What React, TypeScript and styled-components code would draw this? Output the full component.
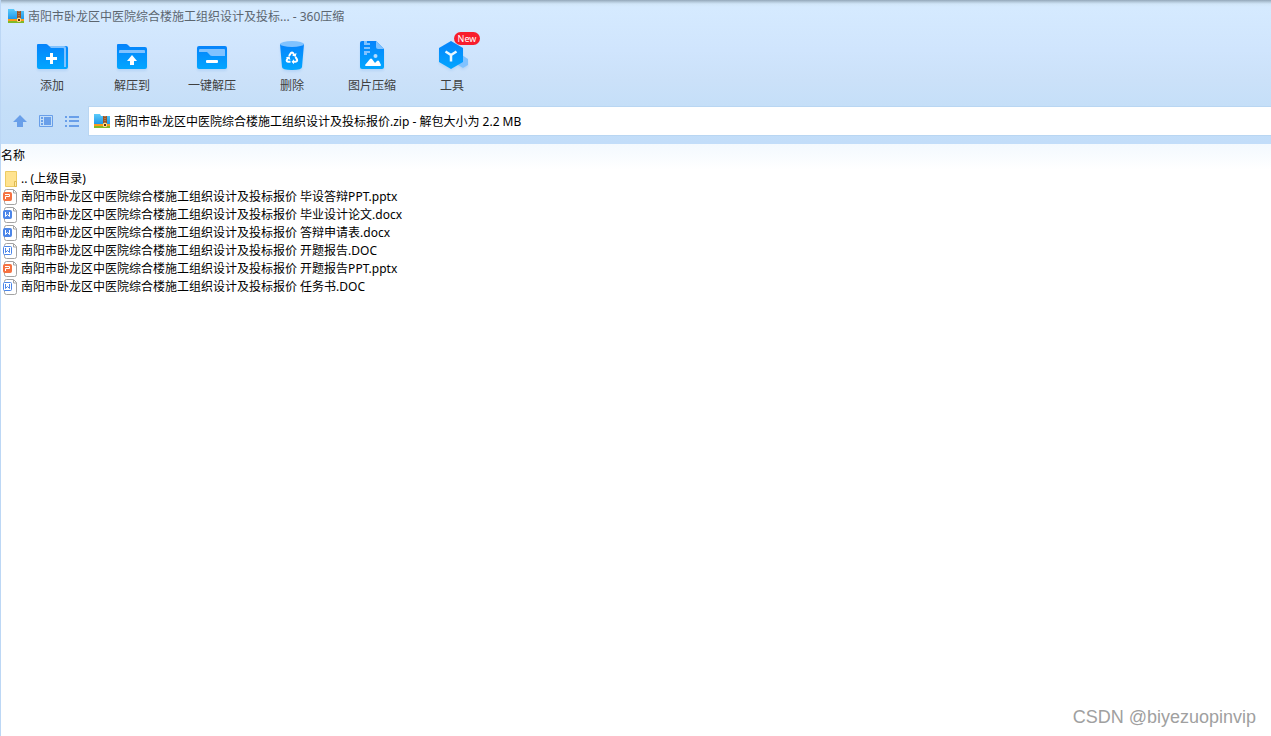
import React from "react";
import styled, { createGlobalStyle } from "styled-components";

const Global = createGlobalStyle`
  * { box-sizing: border-box; }
  body {
    margin: 0;
    background: #fff;
    color: #000;
    font: 12px/18px "Noto Sans", "Noto Sans CJK SC", sans-serif;
  }
  button, input { font: inherit; color: inherit; }
`;

const Window = styled.div`
  display: flex;
  flex-direction: column;
  min-height: 100vh;
  border-left: 1px solid #bcd7f5;
`;

const Chrome = styled.header`
  background:
    linear-gradient(#93a7b9 0, #b5cadb 2px, rgba(206, 227, 245, 0.7) 4px, transparent 7px),
    linear-gradient(#d6ebff 0, #d0e5fd 50px, #cbe1f9 80px, #c5dff8 107px, #c2ddf9 144px);
`;

const TitleBar = styled.div`
  display: flex;
  align-items: center;
  gap: 4px;
  height: 32px;
  padding-left: 7px;
`;

const Title = styled.h1`
  margin: 0;
  padding-top: 2px;
  font-size: 12px;
  font-weight: 400;
  color: #5c6670;
`;

const Toolbar = styled.nav`
  display: flex;
  height: 75px;
  padding-left: 11px;
`;

const Tool = styled.button`
  position: relative;
  display: flex;
  flex-direction: column;
  align-items: center;
  gap: 2px;
  width: 80px;
  height: 68px;
  padding: 7px 0 0;
  border: 0;
  background: none;
  color: #404040;
  white-space: nowrap;
`;

const ToolIcon = styled.svg`
  display: block;
  flex: none;
  width: 36px;
  height: 36px;
  filter: drop-shadow(0 2px 1px rgba(60, 140, 230, 0.15));
`;

const Badge = styled.span`
  position: absolute;
  top: 0;
  left: 42px;
  width: 26px;
  height: 13px;
  border-radius: 7px;
  background: #f81d2c;
  color: #fff;
  font-size: 9px;
  line-height: 13px;
  text-align: center;
`;

const AddressRow = styled.div`
  display: flex;
  align-items: center;
  height: 28px;
  margin-bottom: 9px;
`;

const NavButtons = styled.div`
  display: flex;
  gap: 10px;
  width: 88px;
  padding-left: 11px;
`;

const NavButton = styled.button`
  width: 16px;
  height: 16px;
  padding: 0;
  border: 0;
  background: none;

  svg { display: block; }
`;

const AddressBox = styled.label`
  display: flex;
  flex: 1;
  align-items: center;
  gap: 4px;
  height: 28px;
  padding-left: 5px;
  background: #fff;
  box-shadow: 0 0 0 1px #b9d6f2;
`;

const AddressInput = styled.input`
  flex: 1;
  min-width: 0;
  height: 24px;
  padding: 0;
  border: 0;
  outline: 0;
  background: none;
`;

const FileTable = styled.table`
  width: 100%;
  border-spacing: 0;
`;

const NameHeading = styled.th`
  height: 26px;
  padding: 0 0 3px;
  background: linear-gradient(#f3f9fe, #fff);
  font-weight: 400;
  text-align: left;
`;

const NameCell = styled.td`
  height: 18px;
  padding: 0;
`;

const FileLink = styled.a`
  display: flex;
  align-items: center;
  gap: 4px;
  height: 18px;
  padding-left: 1px;
  color: inherit;
  text-decoration: none;
  white-space: pre;

  svg { flex: none; }
`;

const Watermark = styled.footer`
  margin-top: auto;
  padding: 0 15px 8px 0;
  color: #a0a0a0;
  font: 18px/22px "Liberation Sans", Arial, sans-serif;
  text-align: right;
`;

const ArchiveIcon = () => (
  <svg width="16" height="16" viewBox="0 0 16 16" aria-hidden="true">
    <defs>
      <linearGradient id="archive" x1="0" y1="0" x2="0" y2="1">
        <stop offset="0" stopColor="#5ccbfa" />
        <stop offset="1" stopColor="#1e98ea" />
      </linearGradient>
    </defs>
    <path d="M0 1h6l1 2h9v8H0z" fill="url(#archive)" />
    <path d="M0 11h16v2H0z" fill="#fb9a1c" />
    <path d="M0 13h16v2H0z" fill="#80b927" />
    <path d="M9 3h4v11H9z" fill="#9a5526" />
    <path d="M11 3v7" stroke="#c99a6c" strokeDasharray="1 1" />
    <path d="M9.500 10.500h3v3h-3z" fill="#5f3010" stroke="#ffe18a" />
  </svg>
);

const BlueGradient = () => (
  <defs>
    <linearGradient id="blue" x1="0" y1="0" x2="0" y2="1">
      <stop offset="0" stopColor="#0683fb" />
      <stop offset="1" stopColor="#02a6ff" />
    </linearGradient>
  </defs>
);

const AddIcon = () => (
  <>
    <BlueGradient />
    <path d="M4 5h8q1 0 2 1l1 1h17q2 0 2 2v19q0 2-2 2H5q-2 0-2-2V6q0-1 1-1z" fill="url(#blue)" />
    <path d="M15 7h15q2 0 2 2v19h-2V10q0-1-1-1H17z" fill="#80c2ff" />
    <path d="M17.500 14v11M12 19.500h11" stroke="#fff" strokeWidth="3" />
  </>
);

const ExtractIcon = () => (
  <>
    <path d="M4 5h8q1 0 2 1l2 2h15q2 0 2 2v18q0 2-2 2H5q-2 0-2-2V6q0-1 1-1z" fill="url(#blue)" />
    <path d="M6 11h24q1 0 1 1v2H5v-2q0-1 1-1z" fill="#80c2ff" />
    <path d="m18 16 5 6h-3v4h-4v-4h-3z" fill="#fff" />
  </>
);

const QuickIcon = () => (
  <>
    <rect x="3" y="7" width="30" height="23" rx="2" fill="url(#blue)" />
    <path d="M6 10h24q1 0 1 1v6H18q-2 0-3-2l-2-2H5v-2q0-1 1-1z" fill="#80c2ff" />
    <rect x="12" y="21" width="12" height="3" rx="1" fill="#fff" />
  </>
);

const TrashIcon = () => (
  <>
    <path d="M6 5h24l-2 23q0 3-10 3T8 28z" fill="url(#blue)" />
    <ellipse cx="18" cy="5" rx="12" ry="3" fill="#80c2ff" />
    <g fill="none" stroke="#fff" strokeWidth="2">
      <path d="m15 17 2-3q1-1 2 0l1.500 2.500" />
      <path d="m21.500 18 1.500 2.500q.7 2-1.500 2.300h-2" />
      <path d="M16.500 22.800h-2q-2.500-.3-1.600-2l1.300-2" />
    </g>
    <path d="m22.500 14-.8 4-3.700-1.700zM20 20.300v5L17.500 22.800zM11.800 18.600l3.700-1.300.9 3.700z" fill="#fff" />
  </>
);

const ImageIcon = () => (
  <>
    <path d="M8 2h14l8 8v18q0 2-2 2H8q-2 0-2-2V4q0-2 2-2z" fill="url(#blue)" />
    <path d="M22 2v6q0 2 2 2h6z" fill="#80c2ff" />
    <path d="M10 2h3v2h3v2h-3v2h3v2h-3v2h3v2h-3v2h-3v-4h3v-2h-3V8h3V6h-3V4z" fill="#80c2ff" />
    <circle cx="21.500" cy="17" r="2" fill="#b4dcff" />
    <path d="m11 26 5-6q1-1 2 0l3 4 2-2q1-1 2 0l2 4q0 1-1 1H12q-1 0-1-1z" fill="#fff" />
  </>
);

const ToolsIcon = () => (
  <>
    <path d="m28 16 6 4v6l-5 3-5-3z" fill="#80c2ff" />
    <path d="m17 2 12 7v14l-12 7-12-7V9z" fill="url(#blue)" />
    <path d="m11.500 12.500 5.500 3.500 5.500-3.500M17 16v6.500" fill="none" stroke="#e9f7ff" strokeWidth="2.500" />
  </>
);

const UpIcon = () => (
  <svg width="16" height="16" viewBox="0 0 16 16" aria-hidden="true">
    <path d="m8 2 7 7h-4v5H5V9H1z" fill="#699fe9" />
  </svg>
);

const PreviewIcon = () => (
  <svg width="16" height="16" viewBox="0 0 16 16" aria-hidden="true">
    <path d="M1.500 2.500h13v11h-13z" fill="none" stroke="#699fe9" />
    <path d="M6 4h7v8H6zM3 4h2v2H3zM3 7h2v2H3zM3 10h2v2H3z" fill="#699fe9" />
  </svg>
);

const ListIcon = () => (
  <svg width="16" height="16" viewBox="0 0 16 16" aria-hidden="true">
    <path d="M1 3h2v2H1zM1 7h2v2H1zM1 12h2v2H1zM5 3h10v2H5zM5 7h10v2H5zM5 12h10v2H5z" fill="#699fe9" />
  </svg>
);

type Kind = "folder" | "ppt" | "docx" | "doc";

const FileIcon = ({ kind }: { kind: Kind }) => {
  if (kind === "folder") {
    return (
      <svg width="15" height="18" viewBox="0 0 15 18" aria-hidden="true">
        <path d="M3.500 1.500h11v15h-11z" fill="#ffe38f" stroke="#edcb62" />
        <path d="M12.500 11.500h2v5h-2z" fill="#ffe9a5" stroke="#dfba51" />
      </svg>
    );
  }
  const color = kind === "ppt" ? "#f57242" : "#4c86e8";
  const outline = kind === "doc";
  return (
    <svg width="15" height="18" viewBox="0 0 15 18" aria-hidden="true">
      <path d="M4.500 1.500h7l3 3v10q0 2-2 2h-8q-2 0-2-2v-11q0-2 2-2z" fill="#fff" stroke="#a3a3a3" />
      <path d="M11.500 2v3h3" fill="none" stroke="#a3a3a3" />
      <rect x="1.500" y="4.500" width="8" height="8" rx="1" fill={outline ? "#fff" : color} stroke={color} />
      <path
        d={kind === "ppt" ? "M3 6.500h4.500v2h-4V11" : "M3.500 6v4.500l2-2 2 2V6"}
        fill="none"
        stroke={outline ? color : "#fff"}
      />
    </svg>
  );
};

const tools = [
  { label: "添加", Icon: AddIcon },
  { label: "解压到", Icon: ExtractIcon },
  { label: "一键解压", Icon: QuickIcon },
  { label: "删除", Icon: TrashIcon },
  { label: "图片压缩", Icon: ImageIcon },
  { label: "工具", Icon: ToolsIcon, badge: "New" },
];

const project = "南阳市卧龙区中医院综合楼施工组织设计及投标报价";

const files: { name: string; kind: Kind }[] = [
  { name: ".. (上级目录)", kind: "folder" },
  { name: `${project} 毕设答辩PPT.pptx`, kind: "ppt" },
  { name: `${project} 毕业设计论文.docx`, kind: "docx" },
  { name: `${project} 答辩申请表.docx`, kind: "docx" },
  { name: `${project} 开题报告.DOC`, kind: "doc" },
  { name: `${project} 开题报告PPT.pptx`, kind: "ppt" },
  { name: `${project} 任务书.DOC`, kind: "doc" },
];

export default function App() {
  return (
    <Window>
      <Global />
      <Chrome>
        <TitleBar>
          <ArchiveIcon />
          <Title>南阳市卧龙区中医院综合楼施工组织设计及投标... - 360压缩</Title>
        </TitleBar>
        <Toolbar>
          {tools.map(({ label, Icon, badge }) => (
            <Tool key={label} type="button">
              <ToolIcon viewBox="0 0 36 36" aria-hidden="true">
                <Icon />
              </ToolIcon>
              {label}
              {badge && <Badge>{badge}</Badge>}
            </Tool>
          ))}
        </Toolbar>
        <AddressRow>
          <NavButtons>
            <NavButton type="button" aria-label="向上"><UpIcon /></NavButton>
            <NavButton type="button" aria-label="预览"><PreviewIcon /></NavButton>
            <NavButton type="button" aria-label="列表"><ListIcon /></NavButton>
          </NavButtons>
          <AddressBox>
            <ArchiveIcon />
            <AddressInput aria-label="路径" defaultValue={`${project}.zip - 解包大小为 2.2 MB`} />
          </AddressBox>
        </AddressRow>
      </Chrome>
      <FileTable>
        <thead>
          <tr><NameHeading scope="col">名称</NameHeading></tr>
        </thead>
        <tbody>
          {files.map(({ name, kind }) => (
            <tr key={name}>
              <NameCell>
                <FileLink href="#">
                  <FileIcon kind={kind} />
                  {name}
                </FileLink>
              </NameCell>
            </tr>
          ))}
        </tbody>
      </FileTable>
      <Watermark>CSDN @biyezuopinvip</Watermark>
    </Window>
  );
}
